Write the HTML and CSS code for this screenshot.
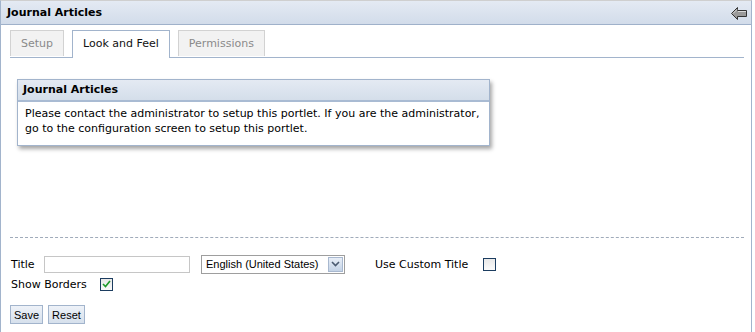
FILE: index.html
```html
<!DOCTYPE html>
<html>
<head>
    <title>Journal Articles</title>
    <link rel="stylesheet" href="styles.css">
</head>
<body>
    <div class="portlet">
        <div class="portlet-title">
            <span>Journal Articles</span>
            <svg class="back-icon" width="16" height="13" viewBox="0 0 16 13">
                <path d="M0.5 6.5 L6.5 0.5 L6.5 3.5 L15.5 3.5 L15.5 9.5 L6.5 9.5 L6.5 12.5 Z" fill="#9a9a9a" stroke="#333" stroke-width="1"/>
                <path d="M2 6.5 L6 2.5 M7 4.5 L15 4.5" stroke="#d8d8d8" stroke-width="1" fill="none"/>
            </svg>
        </div>
        <div class="portlet-content">
            <ul class="tabs">
                <li class="tab">Setup</li>
                <li class="tab current">Look and Feel</li>
                <li class="tab">Permissions</li>
            </ul>

            <div class="preview">
                <div class="preview-box">
                    <div class="preview-title">Journal Articles</div>
                    <div class="preview-body">
                        Please contact the administrator to setup this portlet. If you are the administrator,<br>
                        go to the configuration screen to setup this portlet.
                    </div>
                </div>
            </div>

            <div class="separator"></div>

            <div class="form">
                <div class="form-row">
                    <label class="label-title">Title</label>
                    <input type="text" class="text-input">
                    <div class="select">
                        <span>English (United States)</span>
                        <span class="select-arrow">
                            <svg width="9" height="6" viewBox="0 0 9 6"><path d="M1 1 L4.5 4.5 L8 1" stroke="#4a5a70" stroke-width="1.6" fill="none"/></svg>
                        </span>
                    </div>
                    <label class="label-custom">Use Custom Title</label>
                    <span class="checkbox"></span>
                </div>
                <div class="form-row">
                    <label class="label-borders">Show Borders</label>
                    <span class="checkbox checked">
                        <svg width="9" height="8" viewBox="0 0 9 8"><path d="M1 4 L3.5 6.5 L8 1" stroke="#1d9a2a" stroke-width="1.6" fill="none"/></svg>
                    </span>
                </div>
                <div class="buttons">
                    <button class="btn">Save</button>
                    <button class="btn">Reset</button>
                </div>
            </div>
        </div>
    </div>
</body>
</html>
```

FILE: styles.css
```css
body {
    margin: 0;
    font-family: "DejaVu Sans", Verdana, sans-serif;
    font-size: 11px;
    color: #000;
    background: #fff;
}
.portlet {
    width: 750px;
    height: 331px;
    border: 1px solid #a2b4cc;
    border-top-color: #cfcfcf;
}
.portlet-title {
    height: 23px;
    display: flex;
    align-items: center;
    justify-content: space-between;
    padding: 0 4px 0 6px;
    background: linear-gradient(#e4eaf3, #d2dcea);
    border-bottom: 1px solid #9fb1ca;
    font-weight: bold;
}
.back-icon {
    margin-top: 1px;
}
.portlet-content {
    padding: 5px 7px 0 9px;
}
.tabs {
    list-style: none;
    margin: 0;
    padding: 0;
    display: flex;
    gap: 8px;
    border-bottom: 1px solid #a2b4cc;
    height: 27px;
}
.tab {
    height: 25px;
    line-height: 25px;
    padding: 0 10px;
    border: 1px solid #d2d2d2;
    border-bottom: none;
    background: #f2f2f2;
    color: #8a8a8a;
}
.tab.current {
    height: 27px;
    background: #fff;
    color: #111;
    border-color: #a2b4cc;
}
.preview {
    height: 179px;
    padding: 21px 0 0 7px;
    box-sizing: border-box;
}
.preview-box {
    width: 471px;
    border: 1px solid #a2b4cc;
    box-shadow: 2px 3px 4px rgba(0, 0, 0, 0.35);
}
.preview-title {
    height: 20px;
    line-height: 20px;
    padding-left: 5px;
    font-weight: bold;
    background: linear-gradient(#e4eaf3, #d4deea);
    border-bottom: 2px solid #a9bbd3;
}
.preview-body {
    padding: 4px 7px 9px 7px;
    line-height: 15px;
    white-space: nowrap;
}
.separator {
    border-top: 1px dashed #a0abba;
}
.form {
    padding-top: 16px;
}
.form-row {
    display: flex;
    align-items: center;
    height: 20px;
}
.label-title {
    width: 33px;
    padding-left: 1px;
}
.text-input {
    width: 144px;
    height: 15px;
    padding: 0;
    margin: 0;
    border: 1px solid #c6c6c6;
}
.select {
    margin-left: 11px;
    width: 138px;
    height: 17px;
    border: 1px solid #9e9e9e;
    display: flex;
    align-items: center;
    justify-content: space-between;
    font-family: Arial, "Liberation Sans", sans-serif;
    font-size: 11px;
    padding-left: 4px;
}
.select-arrow {
    width: 15px;
    height: 15px;
    margin-right: 1px;
    background: linear-gradient(#e8eef7, #c4d3e6);
    border: 1px solid #a8b8cf;
    box-sizing: border-box;
    display: flex;
    align-items: center;
    justify-content: center;
}
.label-custom {
    margin-left: 30px;
    width: 108px;
}
.checkbox {
    width: 11px;
    height: 11px;
    border: 1px solid #1c3d60;
    background: linear-gradient(#e8e8e8, #fafafa);
    display: flex;
    align-items: center;
    justify-content: center;
}
.label-borders {
    width: 89px;
    padding-left: 1px;
}
.buttons {
    display: flex;
    gap: 5px;
    margin-top: 11px;
}
.btn {
    height: 19px;
    padding: 0 3px;
    border: 1px solid #a2b4cc;
    background: linear-gradient(#eef2f8, #d6e0ec);
    font-family: Arial, "Liberation Sans", sans-serif;
    font-size: 11px;
    color: #000;
}
```
